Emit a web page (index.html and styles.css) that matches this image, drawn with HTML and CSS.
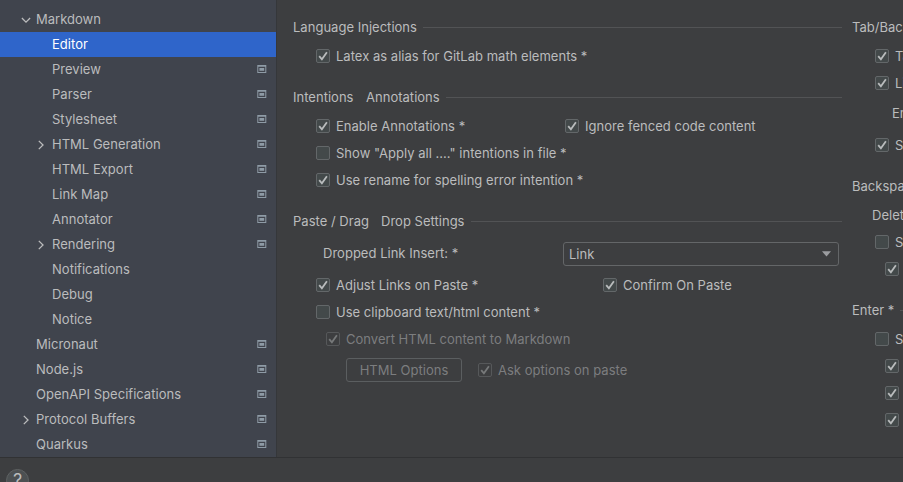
FILE: index.html
```
<!DOCTYPE html>
<html lang="en">
<head>
<meta charset="utf-8">
<title>Settings – Markdown Editor</title>
<link rel="stylesheet" href="styles.css">
</head>
<body>
<svg class="defs" width="0" height="0">
  <symbol id="tick" viewBox="0 0 14 14"><path d="M3.2 7.2 5.9 10.3 10.9 3.3" fill="none" stroke="currentColor" stroke-width="1.8"/></symbol>
  <symbol id="proj" viewBox="0 0 10 8"><path fill-rule="evenodd" d="M.3 0H9.3V8H.3ZM1.3 1.8V7H8.3V1.8Z" fill="currentColor"/><path d="M2.4 3H7.2V5.8H2.4Z" fill="currentColor"/></symbol>
  <symbol id="right" viewBox="0 0 10 10"><path d="M2.8 .9 7 5 2.8 9.1" fill="none" stroke="currentColor" stroke-width="1.3"/></symbol>
  <symbol id="down" viewBox="0 0 10 10"><path d="M.9 3 5 7.1 9.1 3" fill="none" stroke="currentColor" stroke-width="1.3"/></symbol>
</svg>
<div class="main">
  <nav class="tree">
    <div class="node top"><svg class="arrow"><use href="#down"/></svg><span>Markdown</span></div>
    <div class="node sub selected"><span>Editor</span></div>
    <div class="node sub"><span>Preview</span><svg class="proj"><use href="#proj"/></svg></div>
    <div class="node sub"><span>Parser</span><svg class="proj"><use href="#proj"/></svg></div>
    <div class="node sub"><span>Stylesheet</span><svg class="proj"><use href="#proj"/></svg></div>
    <div class="node sub open"><svg class="arrow"><use href="#right"/></svg><span>HTML Generation</span><svg class="proj"><use href="#proj"/></svg></div>
    <div class="node sub"><span>HTML Export</span><svg class="proj"><use href="#proj"/></svg></div>
    <div class="node sub"><span>Link Map</span><svg class="proj"><use href="#proj"/></svg></div>
    <div class="node sub"><span>Annotator</span><svg class="proj"><use href="#proj"/></svg></div>
    <div class="node sub open"><svg class="arrow"><use href="#right"/></svg><span>Rendering</span><svg class="proj"><use href="#proj"/></svg></div>
    <div class="node sub"><span>Notifications</span></div>
    <div class="node sub"><span>Debug</span></div>
    <div class="node sub"><span>Notice</span></div>
    <div class="node"><span>Micronaut</span><svg class="proj"><use href="#proj"/></svg></div>
    <div class="node"><span>Node.js</span><svg class="proj"><use href="#proj"/></svg></div>
    <div class="node"><span>OpenAPI Specifications</span><svg class="proj"><use href="#proj"/></svg></div>
    <div class="node top"><svg class="arrow"><use href="#right"/></svg><span>Protocol Buffers</span><svg class="proj"><use href="#proj"/></svg></div>
    <div class="node"><span>Quarkus</span><svg class="proj"><use href="#proj"/></svg></div>
  </nav>
  <section class="col">
    <h2>Language Injections</h2>
    <div class="row"><label class="check"><i><svg><use href="#tick"/></svg></i><span>Latex as alias for GitLab math elements *</span></label></div>
    <h2 class="next"><span class="t-int">Intentions</span>Annotations</h2>
    <div class="row"><label class="check half"><i><svg><use href="#tick"/></svg></i><span>Enable Annotations *</span></label><label class="check"><i><svg><use href="#tick"/></svg></i><span>Ignore fenced code content</span></label></div>
    <div class="row"><label class="check"><i></i><span>Show "Apply all ...." intentions in file *</span></label></div>
    <div class="row"><label class="check"><i><svg><use href="#tick"/></svg></i><span>Use rename for spelling error intention *</span></label></div>
    <h2 class="next"><span class="t-paste">Paste / Drag</span>Drop Settings</h2>
    <div class="row drop"><span class="drop-label">Dropped Link Insert: *</span><div class="select"><span>Link</span><svg viewBox="0 0 9 6"><path d="M0 .3H9L4.5 5.6Z" fill="currentColor"/></svg></div></div>
    <div class="row"><label class="check wide"><i><svg><use href="#tick"/></svg></i><span>Adjust Links on Paste *</span></label><label class="check"><i><svg><use href="#tick"/></svg></i><span>Confirm On Paste</span></label></div>
    <div class="row"><label class="check"><i></i><span>Use clipboard text/html content *</span></label></div>
    <div class="row in1"><label class="check off"><i><svg><use href="#tick"/></svg></i><span>Convert HTML content to Markdown</span></label></div>
    <div class="row in2"><button class="btn" disabled>HTML Options</button><label class="check off"><i><svg><use href="#tick"/></svg></i><span>Ask options on paste</span></label></div>
  </section>
  <section class="col second">
    <h2>Tab/Backspace</h2>
    <div class="row"><label class="check"><i><svg><use href="#tick"/></svg></i><span>Tab</span></label></div>
    <div class="row"><label class="check"><i><svg><use href="#tick"/></svg></i><span>List</span></label></div>
    <div class="row enable">Enable</div>
    <div class="row smart"><label class="check"><i><svg><use href="#tick"/></svg></i><span>Smart</span></label></div>
    <h2 class="next">Backspace</h2>
    <div class="row delete">Delete</div>
    <div class="row"><label class="check"><i></i><span>Smart</span></label></div>
    <div class="row in1"><label class="check"><i><svg><use href="#tick"/></svg></i></label></div>
    <h2 class="next">Enter *</h2>
    <div class="row"><label class="check"><i></i><span>Smart</span></label></div>
    <div class="row in1"><label class="check"><i><svg><use href="#tick"/></svg></i></label></div>
    <div class="row in1"><label class="check"><i><svg><use href="#tick"/></svg></i></label></div>
    <div class="row in1"><label class="check"><i><svg><use href="#tick"/></svg></i></label></div>
  </section>
</div>
<footer class="footer"><div class="help">?</div></footer>
</body>
</html>
```
FILE: styles.css
```
* { box-sizing: border-box; }
body {
  margin: 0;
  width: 903px;
  height: 482px;
  overflow: hidden;
  background: #3d3e40;
  color: #bbbcbd;
  font: 13px/27px Inter, "Liberation Sans", sans-serif;
  letter-spacing: 0.02px;
  white-space: nowrap;
}
.defs { display: block; height: 0; }
.main { display: flex; height: 457px; overflow: hidden; }
.tree {
  flex: none;
  width: 277px;
  padding-top: 7px;
  background: #40444d;
  border-right: 1px solid #35373a;
}
.node {
  display: flex;
  align-items: center;
  height: 25px;
  line-height: 25px;
  padding: 0 9px 0 36px;
}
.top { padding-left: 21px; }
.sub { padding-left: 52px; }
.open { padding-left: 36px; }
.selected { background: #2f65ca; color: #fff; }
.arrow { width: 10px; height: 10px; flex: none; margin-right: 5px; }
.open .arrow { margin-right: 6px; }
.proj { width: 10px; height: 8px; margin: 0 0 1px auto; color: #8e9ba6; }
.col { flex: none; width: 549px; margin-left: 16px; padding-top: 14px; }
.second { margin-left: 10px; width: 300px; }
h2 {
  display: flex;
  align-items: center;
  height: 27px;
  margin: 0 0 2px;
  font: inherit;
}
h2::after { content: ""; flex: 1; height: 1px; margin-left: 6px; background: #525355; }
.next { margin-top: 14px; }
.t-int { width: 73px; }
.t-paste { width: 88px; }
.row { display: flex; height: 27px; padding-left: 23px; }
.check { display: flex; flex: none; }
.check i {
  width: 14px;
  height: 14px;
  margin: 6px 6px 0 0;
  border: 1px solid #636769;
  border-radius: 2px;
  background: #43494a;
}
.check svg { display: block; width: 14px; height: 14px; margin: -1px; color: #b9bcbd; }
.half { width: 249px; }
.wide { width: 287px; }
.in1 { padding-left: 33px; }
.in2 { height: 31px; padding-left: 53px; margin-top: 2px; }
.in2 .check { margin: 2px 0 0 16px; }
.off { color: #7c7d7f; }
.check.off i { background: none; border-color: #56585a; }
.check.off svg { color: #77797a; }
.drop { height: 34px; margin-top: 3px; padding-left: 30px; line-height: 31px; }
.drop-label { width: 240px; }
.select {
  display: flex;
  align-items: center;
  justify-content: space-between;
  width: 276px;
  height: 24px;
  margin-top: 4px;
  padding: 0 7px 0 5px;
  border: 1px solid #646668;
  border-radius: 3px;
}
.select svg { width: 9px; height: 6px; color: #9b9da0; }
.btn {
  width: 116px;
  height: 24px;
  margin-top: 3px;
  padding: 0;
  border: 1px solid #5b5e60;
  border-radius: 3px;
  background: none;
  color: #7c7d7f;
  font: inherit;
  line-height: 22px;
  letter-spacing: inherit;
}
.enable { height: 31px; padding-left: 40px; line-height: 33px; }
.smart { margin-top: 4px; }
.delete { padding-left: 20px; }
.footer { height: 25px; padding: 11px 0 0 6px; border-top: 1px solid #313234; }
.help {
  width: 23px;
  height: 23px;
  border: 1px solid #5e6162;
  border-radius: 50%;
  background: #4c5052;
  text-align: center;
  font-size: 18px;
  line-height: 21px;
  letter-spacing: 0;
}
```
